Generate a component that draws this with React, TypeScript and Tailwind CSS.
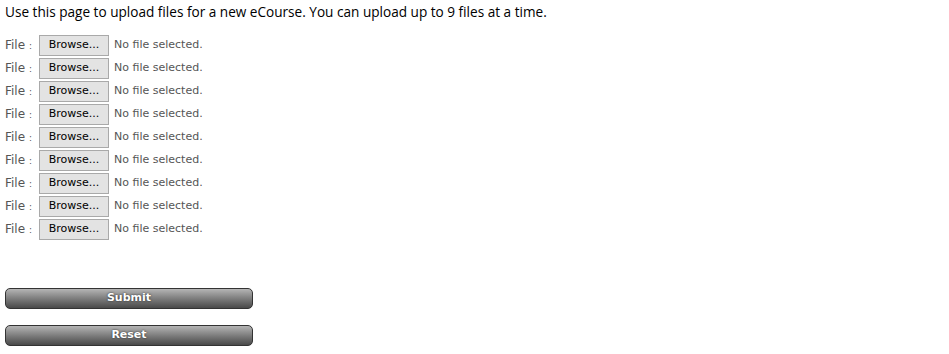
export default function App() {
  const rows = Array.from({ length: 9 })
  return (
    <div className="min-h-screen bg-white pl-[5px] pt-[3px]">
      <p className="text-[13.6px] leading-[18px] text-black" style={{ fontFamily: '"Open Sans", sans-serif' }}>
        Use this page to upload files for a new eCourse. You can upload up to 9 files at a time.
      </p>

      <div className="mt-[14px] flex flex-col gap-[2px]" style={{ fontFamily: '"DejaVu Sans", sans-serif' }}>
        {rows.map((_, i) => (
          <div key={i} className="flex h-[21px] items-center text-[11px]">
            <span className="w-[34px] pb-[2px] text-[12px] leading-none text-[#555]">
              File <span className="text-[9px]">:</span>
            </span>
            <button className="h-[21px] w-[70px] border border-[#a9a9a9] bg-[#e3e3e3] text-[11px] text-black">
              Browse...
            </button>
            <span className="ml-[5px] text-[#555]">No file selected.</span>
          </div>
        ))}
      </div>

      <div className="mt-[48px] flex flex-col gap-[16px]">
        {["Submit", "Reset"].map((label) => (
          <button
            key={label}
            className="h-[21px] w-[248px] rounded-[5px] border border-[#333] bg-gradient-to-b from-[#b5b5b5] to-[#4a4a4a] text-[11px] font-bold text-white [text-shadow:0_0_2px_#222]"
            style={{ fontFamily: '"DejaVu Sans", sans-serif' }}
          >
            {label}
          </button>
        ))}
      </div>
    </div>
  )
}
